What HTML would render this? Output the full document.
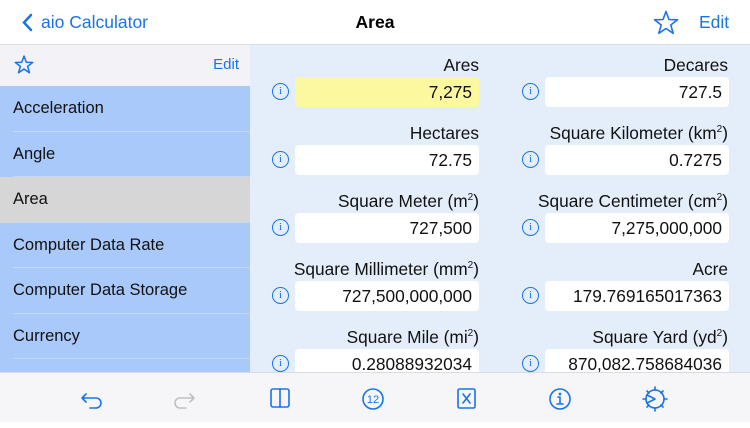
<!DOCTYPE html>
<html><head><meta charset="utf-8"><style>
*{margin:0;padding:0;box-sizing:border-box}
body{width:750px;height:422px;overflow:hidden;font-family:"Liberation Sans",sans-serif;background:#fff;position:relative}
.hdr{position:absolute;left:0;top:0;width:750px;height:45px;background:#fff;border-bottom:1px solid #d8dde5}
.blue{color:#1a73e8}
.side{position:absolute;left:0;top:45px;width:250px;height:327px;background:#a9c9fb}
.stop{height:41px;background:#f2f2f7;position:relative}
.item{height:45.5px;line-height:45px;padding-left:13px;font-size:16.5px;color:#111;position:relative}
.item:after{content:"";position:absolute;left:13px;right:0;bottom:0;height:1px;background:#c4d6f0}
.content{position:absolute;left:250px;top:45px;width:500px;height:327px;background:#e3eefa;overflow:hidden}
.lbl{position:absolute;font-size:17.3px;color:#111;text-align:right;width:300px}
.fld{position:absolute;height:30px;width:184px;background:#fff;border-radius:4px;font-size:17.3px;color:#111;text-align:right;padding-right:7px;line-height:30px}
.info{position:absolute;width:17px;height:17px;border:1.4px solid #1a73e8;border-radius:50%;color:#1a73e8;font-size:11px;text-align:center;line-height:14px;font-family:"Liberation Serif",serif}
sup{font-size:10px;line-height:0}
.tb{position:absolute;left:0;top:372px;width:750px;height:50px;background:#f6f6f8;border-top:1px solid #d8dde5}
</style></head><body>
<div class="hdr">
<svg style="position:absolute;left:21px;top:13px" width="12" height="19"><path d="M10 2 L3 9.5 L10 17" stroke="#1a73e8" stroke-width="2.5" fill="none" stroke-linecap="round"/></svg>
<div class="blue" style="position:absolute;left:41px;top:12px;font-size:17.5px">aio Calculator</div>
<div style="position:absolute;left:0;width:750px;text-align:center;top:12px;font-size:17.5px;font-weight:bold">Area</div>
<svg style="position:absolute;left:653px;top:10px" width="26" height="25" viewBox="0 0 26 25"><path d="M13 1.5 L16 9.5 L24.5 9.8 L17.8 15 L20.2 23.3 L13 18.5 L5.8 23.3 L8.2 15 L1.5 9.8 L10 9.5 Z" stroke="#1a73e8" stroke-width="1.6" fill="none" stroke-linejoin="round"/></svg>
<div class="blue" style="position:absolute;left:699px;top:12px;font-size:17.5px">Edit</div>
</div>
<div class="side">
<div class="stop">
<svg style="position:absolute;left:14px;top:10px" width="20" height="19" viewBox="0 0 26 25"><path d="M13 1.5 L16 9.5 L24.5 9.8 L17.8 15 L20.2 23.3 L13 18.5 L5.8 23.3 L8.2 15 L1.5 9.8 L10 9.5 Z" stroke="#1a73e8" stroke-width="2" fill="none" stroke-linejoin="round"/></svg>
<div class="blue" style="position:absolute;right:11px;top:11px;font-size:15px">Edit</div>
</div>
<div class="item">Acceleration</div>
<div class="item">Angle</div>
<div class="item" style="background:#d6d6d6">Area</div>
<div class="item">Computer Data Rate</div>
<div class="item">Computer Data Storage</div>
<div class="item">Currency</div>
<div class="item"></div>
</div>
<div class="content">
<div class="lbl" style="left:-71px;top:10px">Ares</div>
<div class="info" style="left:22px;top:38px">i</div>
<div class="fld" style="left:45px;top:32px;background:#fcf8a0">7,275</div>
<div class="lbl" style="left:178px;top:10px">Decares</div>
<div class="info" style="left:272px;top:38px">i</div>
<div class="fld" style="left:295px;top:32px">727.5</div>

<div class="lbl" style="left:-71px;top:78px">Hectares</div>
<div class="info" style="left:22px;top:106px">i</div>
<div class="fld" style="left:45px;top:100px">72.75</div>
<div class="lbl" style="left:178px;top:78px">Square Kilometer (km<sup>2</sup>)</div>
<div class="info" style="left:272px;top:106px">i</div>
<div class="fld" style="left:295px;top:100px">0.7275</div>

<div class="lbl" style="left:-71px;top:146px">Square Meter (m<sup>2</sup>)</div>
<div class="info" style="left:22px;top:174px">i</div>
<div class="fld" style="left:45px;top:168px">727,500</div>
<div class="lbl" style="left:178px;top:146px">Square Centimeter (cm<sup>2</sup>)</div>
<div class="info" style="left:272px;top:174px">i</div>
<div class="fld" style="left:295px;top:168px">7,275,000,000</div>

<div class="lbl" style="left:-71px;top:214px">Square Millimeter (mm<sup>2</sup>)</div>
<div class="info" style="left:22px;top:242px">i</div>
<div class="fld" style="left:45px;top:236px">727,500,000,000</div>
<div class="lbl" style="left:178px;top:214px">Acre</div>
<div class="info" style="left:272px;top:242px">i</div>
<div class="fld" style="left:295px;top:236px">179.769165017363</div>

<div class="lbl" style="left:-71px;top:282px">Square Mile (mi<sup>2</sup>)</div>
<div class="info" style="left:22px;top:310px">i</div>
<div class="fld" style="left:45px;top:304px">0.28088932034</div>
<div class="lbl" style="left:178px;top:282px">Square Yard (yd<sup>2</sup>)</div>
<div class="info" style="left:272px;top:310px">i</div>
<div class="fld" style="left:295px;top:304px">870,082.758684036</div>
</div>
<div class="tb">
<svg width="750" height="50">
<g fill="none" stroke="#1a73e8" stroke-width="1.6" stroke-linecap="round" stroke-linejoin="round">
<path d="M86 21 L82 25 L86 29 M82 25 H96 A5 5 0 0 1 96 35 H90"/>
<path d="M190 21 L194 25 L190 29 M194 25 H180 A5 5 0 0 0 180 35 H186" stroke="#c0c0c4"/>
<rect x="271" y="16" width="18" height="18" rx="2"/><path d="M280 16 V34"/>
<circle cx="373" cy="26" r="10"/>
<rect x="458" y="16" width="17" height="19" rx="1.5"/><path d="M463 21 L470 30 M470 21 L463 30"/>
<circle cx="560" cy="26" r="10"/><path d="M558 24 H560 V31 M557 31 H563"/>
<circle cx="560" cy="21" r="0.6"/>
<circle cx="655" cy="26" r="9"/><path d="M655 17 L655 14 M655 35 L655 38 M646 26 H643 M664 26 H667 M649 20 L647 18 M661 32 L663 34 M661 20 L663 18 M649 32 L647 34 M647 22 L655 26 L647 30"/>
</g>
<text x="373" y="30" font-size="11" fill="#1a73e8" text-anchor="middle" font-family="Liberation Sans">12</text>
</svg>
</div>
</body></html>
